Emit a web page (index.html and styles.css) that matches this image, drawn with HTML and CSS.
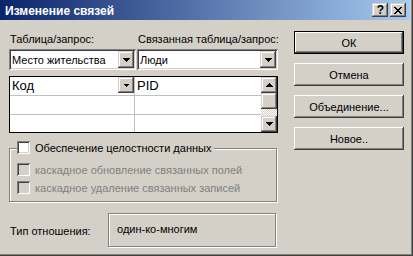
FILE: index.html
```html
<!DOCTYPE html>
<html lang="ru">
<head>
<meta charset="utf-8">
<title>Изменение связей</title>
<link rel="stylesheet" href="styles.css">
</head>
<body>
<div class="window">
  <div class="titlebar">
    <span class="title">Изменение связей</span>
    <div class="caption-btns">
      <span class="cap-btn help">?</span>
      <span class="cap-btn close"><svg width="8" height="7" viewBox="0 0 8 7" shape-rendering="crispEdges"><path d="M0 0h2v1H0z M6 0h2v1H6z M1 1h2v1H1z M5 1h2v1H5z M2 2h4v1H2z M3 3h2v1H3z M2 4h4v1H2z M1 5h2v1H1z M5 5h2v1H5z M0 6h2v1H0z M6 6h2v1H6z" fill="#000"/></svg></span>
    </div>
  </div>
  <div class="content">
    <div class="left">
      <div class="selectors">
        <div class="sel-col">
          <div class="label">Таблица/запрос:</div>
          <div class="combo">
            <span class="combo-text">Место жительства</span>
            <span class="combo-btn"><svg width="7" height="4" viewBox="0 0 7 4" shape-rendering="crispEdges"><path d="M0 0h7v1H0z M1 1h5v1H1z M2 2h3v1H2z M3 3h1v1H3z" fill="#000"/></svg></span>
          </div>
        </div>
        <div class="sel-col">
          <div class="label">Связанная таблица/запрос:</div>
          <div class="combo">
            <span class="combo-text">Люди</span>
            <span class="combo-btn"><svg width="7" height="4" viewBox="0 0 7 4" shape-rendering="crispEdges"><path d="M0 0h7v1H0z M1 1h5v1H1z M2 2h3v1H2z M3 3h1v1H3z" fill="#000"/></svg></span>
          </div>
        </div>
      </div>

      <div class="grid">
        <div class="grid-cells">
          <div class="row head">
            <div class="cell c1"><span class="cell-text">Код</span><span class="mini-btn"><svg width="5" height="3" viewBox="0 0 5 3" shape-rendering="crispEdges"><path d="M0 0h5v1H0z M1 1h3v1H1z M2 2h1v1H2z" fill="#000"/></svg></span></div>
            <div class="cell c2"><span class="cell-text">PID</span></div>
          </div>
          <div class="row">
            <div class="cell c1"></div>
            <div class="cell c2"></div>
          </div>
          <div class="row last">
            <div class="cell c1"></div>
            <div class="cell c2"></div>
          </div>
        </div>
        <div class="vscroll">
          <span class="sb-btn"><svg width="7" height="4" viewBox="0 0 7 4" shape-rendering="crispEdges"><path d="M3 0h1v1H3z M2 1h3v1H2z M1 2h5v1H1z M0 3h7v1H0z" fill="#000"/></svg></span>
          <span class="sb-thumb"></span>
          <span class="sb-track"></span>
          <span class="sb-btn"><svg width="7" height="4" viewBox="0 0 7 4" shape-rendering="crispEdges"><path d="M0 0h7v1H0z M1 1h5v1H1z M2 2h3v1H2z M3 3h1v1H3z" fill="#000"/></svg></span>
        </div>
      </div>

      <div class="group">
        <div class="legend"><span class="chk"></span><span>Обеспечение целостности данных</span></div>
        <div class="chk-row first disabled"><span class="chk dis"></span><span>каскадное обновление связанных полей</span></div>
        <div class="chk-row disabled"><span class="chk dis"></span><span>каскадное удаление связанных записей</span></div>
      </div>

      <div class="type-row">
        <span class="type-label">Тип отношения:</span>
        <div class="type-box">один-ко-многим</div>
      </div>
    </div>

    <div class="right">
      <div class="btn default"><span>ОК</span></div>
      <div class="btn">Отмена</div>
      <div class="btn">Объединение...</div>
      <div class="btn">Новое..</div>
    </div>
  </div>
</div>
</body>
</html>
```
FILE: styles.css
```css
* { box-sizing: border-box; }
html, body { margin: 0; padding: 0; }
body {
  width: 413px;
  height: 256px;
  overflow: hidden;
  background: #D4D0C8;
  font-family: "Liberation Sans", Arial, sans-serif;
  font-size: 11px;
  color: #000;
}
.window {
  width: 413px;
  height: 256px;
  background: #D4D0C8;
  border-right: 1px solid #404040;
  border-bottom: 1px solid #404040;
  box-shadow: inset -1px -1px #808080;
  padding-right: 2px;
  padding-bottom: 2px;
  display: flex;
  flex-direction: column;
}
.titlebar {
  height: 20px;
  flex: none;
  background: linear-gradient(to right, #0A246A, #A6CAF0);
  display: flex;
  align-items: center;
  justify-content: space-between;
  padding: 0 4px 0 5px;
}
.title {
  color: #fff;
  font-weight: bold;
  font-size: 12px;
  padding-top: 1px;
}
.caption-btns { display: flex; gap: 2px; }
.cap-btn {
  width: 16px;
  height: 14px;
  background: #D4D0C8;
  box-shadow: inset -1px -1px #404040, inset 1px 1px #D4D0C8, inset -2px -2px #808080, inset 2px 2px #fff;
  display: flex;
  align-items: center;
  justify-content: center;
}
.cap-btn.help {
  font-weight: bold;
  font-size: 12px;
  line-height: 14px;
  padding-left: 1px;
}
.content {
  display: flex;
  gap: 16px;
  padding-left: 9px;
}
.left {
  width: 269px;
  display: flex;
  flex-direction: column;
}
.selectors {
  display: grid;
  grid-template-columns: 127px 141px;
  column-gap: 1px;
  margin-top: 13px;
}
.label {
  height: 13px;
  line-height: 13px;
  padding-left: 1px;
  white-space: nowrap;
}
.combo {
  margin-top: 3px;
  height: 21px;
  background: #fff;
  box-shadow: inset 1px 1px #808080, inset -1px -1px #fff, inset 2px 2px #404040, inset -2px -2px #D4D0C8;
  display: flex;
  align-items: center;
  padding: 2px;
}
.combo-text {
  flex: 1;
  padding-left: 1px;
  white-space: nowrap;
  overflow: hidden;
}
.combo-btn {
  width: 16px;
  height: 17px;
  background: #D4D0C8;
  box-shadow: inset -1px -1px #404040, inset 1px 1px #D4D0C8, inset -2px -2px #808080, inset 2px 2px #fff;
  display: flex;
  align-items: center;
  justify-content: center;
  padding-top: 1px;
}
.combo-btn svg, .sb-btn svg, .mini-btn svg { display: block; }

.grid {
  margin-top: 6px;
  height: 57px;
  border: 1px solid #000;
  background: #fff;
  display: flex;
}
.grid-cells {
  flex: 1;
  display: flex;
  flex-direction: column;
}
.row {
  display: flex;
  height: 19px;
  border-bottom: 1px solid #C0C0C0;
}
.row.last { height: 17px; border-bottom: none; }
.cell { height: 100%; }
.cell.c1 {
  width: 125px;
  border-right: 1px solid #C0C0C0;
  display: flex;
  align-items: flex-start;
}
.cell.c2 { flex: 1; }
.cell-text {
  display: block;
  font-size: 13px;
  line-height: 18px;
  padding-left: 2px;
  flex: 1;
}
.mini-btn {
  width: 16px;
  height: 16px;
  background: #D4D0C8;
  box-shadow: inset -1px -1px #404040, inset 1px 1px #D4D0C8, inset -2px -2px #808080, inset 2px 2px #fff;
  display: flex;
  align-items: center;
  justify-content: center;
}
.vscroll {
  width: 16px;
  display: flex;
  flex-direction: column;
}
.sb-btn, .sb-thumb {
  height: 16px;
  flex: none;
  background: #D4D0C8;
  box-shadow: inset -1px -1px #404040, inset 1px 1px #D4D0C8, inset -2px -2px #808080, inset 2px 2px #fff;
  display: flex;
  align-items: center;
  justify-content: center;
}
.sb-track {
  flex: 1;
  background: repeating-conic-gradient(#fff 0 25%, #D4D0C8 0 50%) 0 0 / 2px 2px;
}

.group {
  margin-top: 15px;
  width: 268px;
  height: 54px;
  border: 1px solid #808080;
  box-shadow: inset 1px 1px #fff, 1px 1px #fff;
  padding: 0 0 0 7px;
  display: flex;
  flex-direction: column;
}
.legend {
  margin-top: -8px;
  align-self: flex-start;
  display: flex;
  align-items: center;
  gap: 5px;
  height: 13px;
  background: #D4D0C8;
  padding-right: 3px;
  white-space: nowrap;
}
.chk {
  width: 13px;
  height: 13px;
  flex: none;
  background: #fff;
  box-shadow: inset 1px 1px #808080, inset -1px -1px #fff, inset 2px 2px #404040, inset -2px -2px #D4D0C8;
}
.chk.dis { background: #D4D0C8; }
.chk-row {
  display: flex;
  align-items: center;
  gap: 5px;
  height: 13px;
  margin-top: 5px;
  white-space: nowrap;
}
.chk-row.first { margin-top: 9px; }
.chk-row.disabled { color: #808080; }

.type-row {
  margin-top: 11px;
  display: flex;
  align-items: center;
}
.type-label {
  width: 99px;
  padding-left: 1px;
  padding-top: 2px;
}
.type-box {
  width: 168px;
  height: 34px;
  border: 1px solid #808080;
  box-shadow: inset 1px 1px #fff, 1px 1px #fff;
  padding-left: 8px;
  padding-bottom: 2px;
  display: flex;
  align-items: center;
}

.right {
  width: 110px;
  padding-top: 11px;
  display: flex;
  flex-direction: column;
  gap: 9px;
}
.btn {
  height: 23px;
  background: #D4D0C8;
  box-shadow: inset -1px -1px #404040, inset 1px 1px #fff, inset -2px -2px #808080, inset 2px 2px #D4D0C8;
  display: flex;
  align-items: center;
  justify-content: center;
  font-size: 11px;
}
.btn.default {
  border: 1px solid #000;
  box-shadow: inset -1px -1px #404040, inset 1px 1px #fff, inset -2px -2px #808080, inset 2px 2px #D4D0C8;
}
```
